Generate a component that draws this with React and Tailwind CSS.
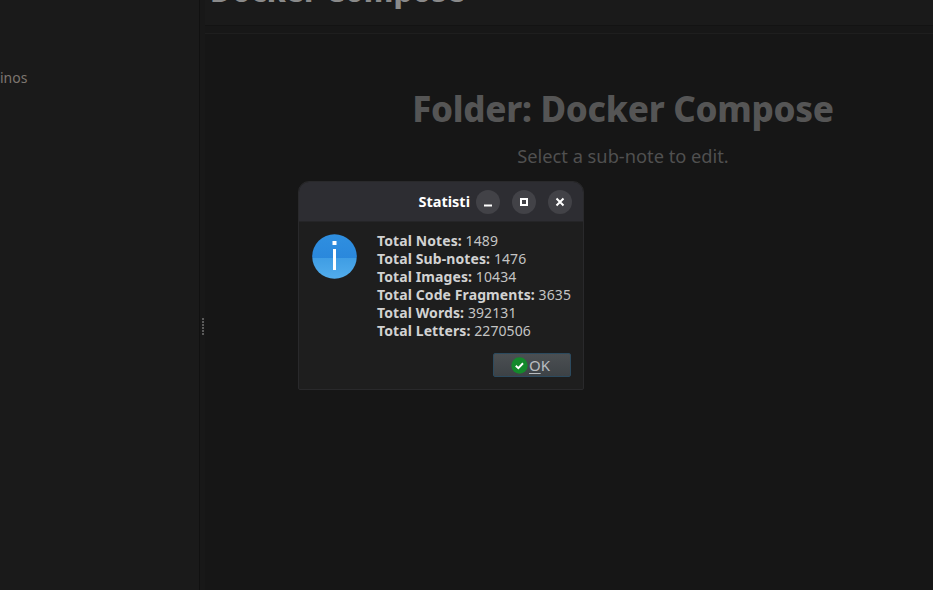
const font = { fontFamily: '"Noto Sans", "Open Sans", sans-serif' };

const stats = [
  ['Total Notes:', '1489'],
  ['Total Sub-notes:', '1476'],
  ['Total Images:', '10434'],
  ['Total Code Fragments:', '3635'],
  ['Total Words:', '392131'],
  ['Total Letters:', '2270506'],
];

const WinButton = ({ children }) => (
  <div className="flex h-6 w-6 items-center justify-center rounded-full bg-[#424247]">
    <svg width="10" height="10" viewBox="0 0 10 10" fill="none" stroke="#fff" strokeWidth="2">
      {children}
    </svg>
  </div>
);

const InfoIcon = () => (
  <svg width="45" height="45" viewBox="0 0 45 45">
    <defs>
      <clipPath id="disc">
        <circle cx="22.5" cy="22.5" r="22.3" />
      </clipPath>
      <linearGradient id="upper" x1="0" y1="0" x2="0" y2="1">
        <stop offset="0" stopColor="#2f8fe0" />
        <stop offset="1" stopColor="#2a88dc" />
      </linearGradient>
      <linearGradient id="lower" x1="0" y1="0" x2="0" y2="1">
        <stop offset="0" stopColor="#3f9de4" />
        <stop offset="1" stopColor="#52adec" />
      </linearGradient>
    </defs>
    <g clipPath="url(#disc)">
      <rect width="45" height="24" fill="url(#upper)" />
      <rect y="24" width="45" height="21" fill="url(#lower)" />
    </g>
    <rect x="20.5" y="7" width="4" height="4" fill="#fff" />
    <rect x="21" y="15" width="3" height="21" fill="#fff" />
  </svg>
);

const App = () => {
  return (
    <div className="relative flex h-[590px] w-[933px] overflow-hidden bg-[#161616]" style={font}>
      {/* sidebar */}
      <div className="h-full w-[200px] shrink-0 border-r border-[#111111] bg-[#1a1a1a] pt-[68px]">
        <div className="text-[14px] leading-5 text-[#7d7670]">inos</div>
      </div>

      {/* splitter */}
      <div className="flex h-full w-[5px] shrink-0 flex-col items-center justify-center gap-px bg-[#181818] pt-[62px]">
        {[0, 1, 2, 3, 4, 5].map((i) => (
          <div key={i} className="h-[2px] w-[2px] bg-[#5a5a5a]" />
        ))}
      </div>

      {/* main */}
      <div className="flex h-full min-w-0 flex-1 flex-col">
        <div className="h-[26px] shrink-0 overflow-hidden border-b border-[#131313] bg-[#1a1a1a] pl-[5px]">
          <div className="mt-[-30px] text-[30px] font-extrabold leading-[42px] whitespace-nowrap text-[#8a8a8a]">
            Docker Compose
          </div>
        </div>
        <div className="h-[8px] shrink-0 border-b border-[#1e1e1e] bg-[#171717]" />
        <div className="flex flex-1 flex-col items-center pt-[51px] pl-[108px]">
          <div className="text-[35px] font-extrabold leading-[48px] tracking-[-0.3px] text-[#555555]">Folder: Docker Compose</div>
          <div className="mt-[11px] text-[18.25px] leading-6 text-[#505050]">Select a sub-note to edit.</div>
        </div>
      </div>

      {/* dialog */}
      <div className="absolute left-[298px] top-[181px] flex h-[209px] w-[286px] flex-col overflow-hidden rounded-t-[11px] rounded-b-[2px] border border-[#29292b] bg-[#1e1e1e]">
        <div className="flex h-[40px] shrink-0 items-center justify-end gap-3 border-b border-[#252527] bg-[#2d2d32] pr-[11px]">
          <div className="mr-[-6px] text-[14.5px] font-bold whitespace-nowrap text-white">Statisti</div>
          <WinButton>
            <path d="M1 8.5h8" />
          </WinButton>
          <WinButton>
            <rect x="2" y="2" width="6" height="6" />
          </WinButton>
          <WinButton>
            <path d="M1.5 1.5l7 7M8.5 1.5l-7 7" />
          </WinButton>
        </div>
        <div className="flex flex-1 flex-col">
          <div className="flex pt-[10px] pl-[13px]">
            <div className="mt-[2px]">
              <InfoIcon />
            </div>
            <div className="ml-[20px] text-[14px] leading-[18px] tracking-[0.1px] whitespace-nowrap text-[#c4c4c4]">
              {stats.map(([label, value]) => (
                <div key={label}>
                  <span className="font-bold text-[#d2d2d2]">{label}</span> {value}
                </div>
              ))}
            </div>
          </div>
          <div className="flex justify-end pt-[13px] pr-[12px]">
            <button className="flex h-[24px] w-[78px] items-center justify-center gap-[1px] rounded-[2px] border border-[#2c4a5e] bg-linear-to-b from-[#4b4f52] to-[#3d4246] pr-[3px] text-[15px] text-[#b9bdc0]">
              <svg width="17" height="17" viewBox="0 0 16 16">
                <circle cx="8" cy="8" r="7.7" fill="#14892c" />
                <path d="M4.5 8.2l2.4 2.3 4.4-4.6" fill="none" stroke="#fff" strokeWidth="1.8" />
              </svg>
              <span><span className="underline underline-offset-2">O</span>K</span>
            </button>
          </div>
        </div>
      </div>
    </div>
  );
};

export default App;
